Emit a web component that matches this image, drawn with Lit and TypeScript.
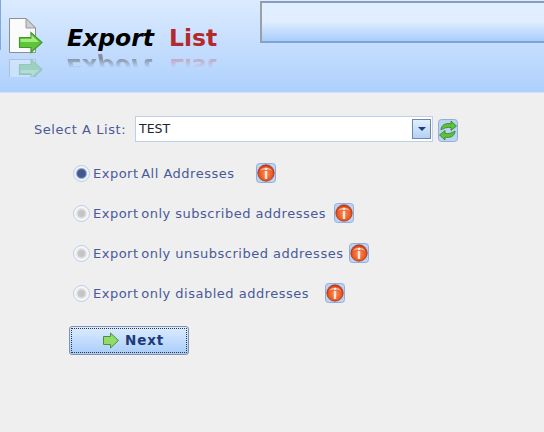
import { LitElement, html, css, svg } from "lit";
import { customElement } from "lit/decorators.js";

const docIcon = svg`
  <path d="M1.5 1.5H18L27.5 11V35.5H1.5Z" fill="#fbfbfb" stroke="#8f8f8f"/>
  <path d="M18 1.5V11H27.5Z" fill="#cfcfd6" stroke="#9a9a9a"/>
  <path d="M11.5 20.5H23V15.5L34 25.5L23 35.5V30.5H11.5Z" fill="#5fc43a" stroke="#3f9a2a" stroke-width="1.2"/>
  <path d="M12.5 22H23.5V18L31 25H12.5Z" fill="#a6ea7c"/>`;

const info = html`<span class="info"><svg width="20" height="20" viewBox="0 0 20 20">
  <defs>
    <radialGradient id="ig" cx="50%" cy="55%" r="55%"><stop offset="0" stop-color="#fb8f5e"/><stop offset=".7" stop-color="#ec5a22"/><stop offset="1" stop-color="#b8341a"/></radialGradient>
  </defs>
  <rect x=".5" y=".5" width="19" height="19" rx="3" fill="#bcd4f2" stroke="#8fb0dc"/>
  <circle cx="10" cy="10" r="8.2" fill="url(#ig)" stroke="#a93a22" stroke-width=".8"/>
  <path d="M4 8C5 3.5 15 3.5 16 8C13 6 7 6 4 8Z" fill="#fff" opacity=".5"/>
  <rect x="8.8" y="4.8" width="2.4" height="2.2" fill="#ffe9dc"/>
  <rect x="8.8" y="8" width="2.4" height="8" fill="#ffe9dc"/>
</svg></span>`;

const opts = [
  { w: "Export", t: "All Addresses", on: true, gap: 21 },
  { w: "Export", t: "only subscribed addresses", on: false, gap: 8 },
  { w: "Export", t: "only unsubscribed addresses", on: false, gap: 6 },
  { w: "Export", t: "only disabled addresses", on: false, gap: 16 },
];

@customElement("app-root")
export class AppRoot extends LitElement {
  static styles = css`
    :host { display: block; width: 544px; height: 432px; overflow: hidden; background: #efefef; font-family: "DejaVu Sans", Verdana, sans-serif; }
    .head { height: 92px; display: flex; align-items: flex-start; background: linear-gradient(#7fa8dc, #7fa8dc) 0 0 / 1px 50px no-repeat, linear-gradient(#dcebff, #aed0fd); border-bottom: 1px solid #cfe2fb; overflow: hidden; }
    .logo { width: 36px; margin: 17px 0 0 8px; flex: none; }
    .logo svg { display: block; }
    .logo .mirror { transform: scaleY(-1); opacity: .3; margin-top: 4px; height: 19px; display: flex; align-items: flex-end; overflow: hidden; }
    .title { margin: 24px 0 0 23px; width: 193px; flex: none; font-size: 23.5px; font-weight: 700; line-height: 29px; white-space: nowrap; }
    .title i { color: #000; margin-right: 15px; }
    .title b { color: #b42a2a; }
    .mirror-t { transform: scaleY(-1); margin-top: -1px; opacity: .55; filter: blur(.3px); -webkit-mask-image: linear-gradient(to bottom, transparent 45%, #000 78%); mask-image: linear-gradient(to bottom, transparent 45%, #000 78%); }
    .mirror-t i { color: #555; }
    .mirror-t b { color: #c87a88; }
    .panel { margin: 1px 0 0 0; flex: 1; height: 38px; border: 2px solid #8a9cb8; border-left-color: #9a9fa8; border-right: none; border-bottom-color: #7fa3d2; background: linear-gradient(#e0eeff 0 48%, #a9cdfb); }
    .body { padding: 22px 0 0 34px; color: #4a5a98; font-size: 13px; }
    .sel-row { display: flex; align-items: center; height: 28px; }
    .sel-label { width: 101px; letter-spacing: .55px; }
    .select { width: 298px; height: 26px; box-sizing: border-box; background: #fff; border: 1px solid #bdd0e8; display: flex; align-items: center; justify-content: space-between; color: #20252f; padding: 0 0 2px 3px; font-size: 12.5px; }
    .drop { width: 19px; height: 20px; margin: 2px 1px 0 0; box-sizing: border-box; border: 1px solid #7088a8; background: linear-gradient(#e2eefd, #b4d0f4); display: flex; align-items: center; justify-content: center; }
    .drop span { width: 0; height: 0; border: 4px solid transparent; border-top: 4px solid #1c3d78; border-bottom: 0; }
    .refresh { margin: 3px 0 0 5px; display: block; }
    .opts { margin: 20px 0 0 39px; display: flex; flex-direction: column; gap: 20px; }
    .opt { display: flex; align-items: center; height: 20px; white-space: nowrap; letter-spacing: .5px; }
    .w1 { margin-right: -2px; }
    .radio { width: 17px; height: 17px; box-sizing: border-box; border-radius: 50%; border: 1px solid #b8cfea; background: radial-gradient(circle, #c4c4c4 0 26%, #d8d8d8 38%, #f6f6f6 56%); margin-right: 3px; flex: none; }
    .radio.on { background: radial-gradient(circle, #42588f 0 36%, #7e90b8 44%, #f0f3f8 56%); }
    .info { display: block; width: 20px; height: 20px; flex: none; }
    .info svg { display: block; }
    .next { margin: 23px 0 0 35px; width: 120px; height: 29px; box-sizing: border-box; padding: 0 0 1px 8px; display: flex; align-items: center; justify-content: center; gap: 5px; border: 1px solid #7e93b5; border-radius: 3px; background: linear-gradient(#dcebff, #a9cdf9); outline: 1px dotted #333; outline-offset: -3px; color: #1c3a78; font-family: "DejaVu Sans", sans-serif; font-size: 13.5px; font-weight: 700; letter-spacing: .8px; }
  `;

  render() {
    return html`
      <div class="head">
        <div class="logo">
          <svg width="36" height="37" viewBox="0 0 36 37">${docIcon}</svg>
          <div class="mirror"><svg width="36" height="37" viewBox="0 0 36 37">${docIcon}</svg></div>
        </div>
        <div class="title">
          <div><i>Export</i><b>List</b></div>
          <div class="mirror-t" aria-hidden="true"><i>Export</i><b>List</b></div>
        </div>
        <div class="panel"></div>
      </div>
      <div class="body">
        <div class="sel-row">
          <span class="sel-label">Select A List:</span>
          <div class="select">TEST<span class="drop"><span></span></span></div>
          <svg class="refresh" width="20" height="23" viewBox="0 0 20 23">
            <rect x=".5" y=".5" width="19" height="22" rx="3" fill="#bcd4f2" stroke="#8fb0dc"/>
            <path d="M3 11C3 6 8 3.500 13 5V2L18.500 7L13 11.500V8.500C9 8 6 9 3 11Z" fill="#5cc43a" stroke="#2f7f22" stroke-width=".8"/>
            <path d="M17 12C17 17 12 19.500 7 18V21L1.500 16L7 11.500V14.500C11 15 14 14 17 12Z" fill="#5cc43a" stroke="#2f7f22" stroke-width=".8"/>
          </svg>
        </div>
        <div class="opts">
          ${opts.map(o => html`<div class="opt">
            <span class="radio ${o.on ? "on" : ""}"></span>
            <span style="margin-right:${o.gap}px"><span class="w1">${o.w}</span> ${o.t}</span>
            ${info}
          </div>`)}
        </div>
        <button class="next">
          <svg width="18" height="17" viewBox="0 0 18 17">
            <path d="M1.500 4.500H8.500V1L16.500 8.500L8.500 16V12.500H1.500Z" fill="#8fdc6a" stroke="#4f8f3a"/>
          </svg>Next</button>
      </div>`;
  }
}
